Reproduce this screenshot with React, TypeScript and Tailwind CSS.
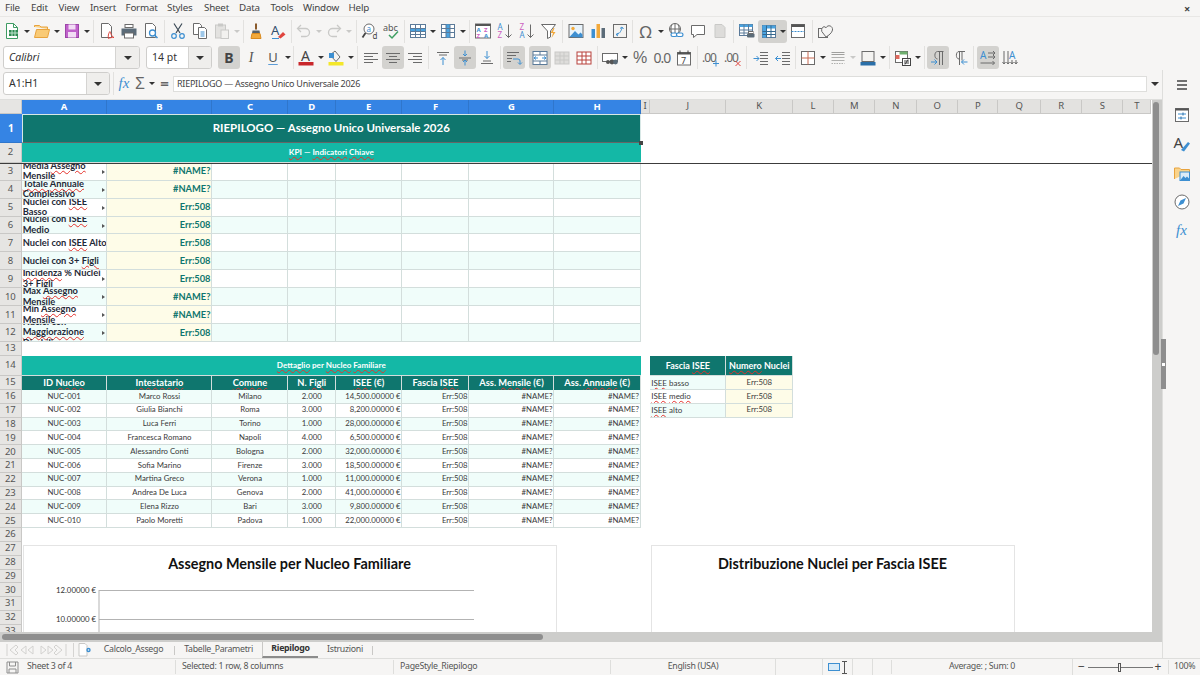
import type { ReactNode } from 'react'

const UI = "font-['Noto_Sans',sans-serif]"
const CELL = "font-['Lato','Liberation_Sans',sans-serif]"

const MENUS: [string, string][] = [
  ['File', 'w-[26px]'], ['Edit', 'w-[27.5px]'], ['View', 'w-[31.5px]'], ['Insert', 'w-[35.5px]'], ['Format', 'w-[41.5px]'],
  ['Styles', 'w-[37px]'], ['Sheet', 'w-[35px]'], ['Data', 'w-[31.5px]'], ['Tools', 'w-[32.5px]'], ['Window', 'w-[45.5px]'], ['Help', 'w-[30px]'],
]

const GREY = '#6b6b6b'
const BLUE = '#3d8fd1'
const DIS = '#c9c9c7'

function Ic({ children }: { children: ReactNode }) {
  return <svg width="18" height="18" viewBox="0 0 18 18" fill="none" strokeWidth="1">{children}</svg>
}

function Btn({ children, on }: { children: ReactNode; on?: boolean }) {
  return (
    <div className={`w-[22px] h-[23px] flex items-center justify-center shrink-0 rounded-[3px] ${on ? 'bg-[#d3d2cf]' : ''}`}>
      {children}
    </div>
  )
}

function Dd({ off }: { off?: boolean }) {
  return (
    <div className="w-[8px] h-[23px] flex items-center justify-center shrink-0">
      <div className={`w-0 h-0 border-l-[3px] border-r-[3px] border-t-[3px] border-l-transparent border-r-transparent ${off ? 'border-t-[#c9c9c7]' : 'border-t-[#333]'}`} />
    </div>
  )
}

function Sep({ w }: { w: string }) {
  return (
    <div className={`${w} h-[23px] flex justify-center shrink-0`}>
      <div className="w-px h-full bg-[#e2e1df]" />
    </div>
  )
}

function Select({ label, w, dd, italic }: { label: string; w: string; dd: string; italic?: boolean }) {
  return (
    <div className={`${w} h-[23px] flex shrink-0 rounded-[3px] border border-[#cfcecc] bg-white overflow-hidden`}>
      <div className={`flex-1 pl-[5px] flex items-center text-[10.5px] text-[#333] ${italic ? 'italic' : ''}`}>{label}</div>
      <div className={`${dd} flex items-center justify-center bg-[#efeeec] border-l border-[#d5d4d2]`}>
        <div className="w-0 h-0 border-l-[4px] border-r-[4px] border-t-[4px] border-l-transparent border-r-transparent border-t-[#333]" />
      </div>
    </div>
  )
}

function Lines({ d, color = GREY }: { d: string; color?: string }) {
  return <path d={d} stroke={color} />
}

function Toolbar1() {
  return (
    <div className="h-[28px] flex items-center pl-px">
      <Btn><Ic><path d="M3.5 1.5h7l4 4v11h-11z" fill="#fff" stroke="#3f9c63" /><path d="M10.5 1.5v4h4" stroke="#3f9c63" /><rect x="6" y="8" width="9" height="6" fill="#2f8a52" /><path d="M9 8v6M12 8v6M6 11h9" stroke="#bfe3cc" /></Ic></Btn>
      <Dd />
      <Btn><Ic><path d="M1.5 5V3.5h5l1.5 1.5h6.5V7" fill="#f9d38b" stroke="#e8a33d" /><path d="M1.5 15.5 3.5 7.5h13l-2 8z" fill="#f9ca75" stroke="#e8a33d" /></Ic></Btn>
      <Dd />
      <Btn><Ic><rect x="2.5" y="2.5" width="13" height="13" fill="#c061cb" stroke="#9c45a8" /><rect x="5.5" y="2.5" width="7" height="5" fill="#f2dcf5" /><rect x="5" y="10" width="8" height="5.5" fill="#f2dcf5" /></Ic></Btn>
      <Dd />
      <Sep w="w-[5px]" />
      <Btn><Ic><path d="M3.5 1.5h7l3 3v11h-10z" fill="#fff" stroke={GREY} /><path d="M10.5 16.5c-1-3 1-7 1.5-7s1 5 4 6c-2 0-4 0-5.500 1z" stroke="#e0453e" /></Ic></Btn>
      <Btn><Ic><rect x="5" y="2.500" width="8" height="3" fill="#fff" stroke={GREY} /><path d="M1.500 6.500h15v7h-15z" fill="#5b6b78" /><rect x="4.500" y="11" width="9" height="5" fill="#fff" stroke={GREY} /></Ic></Btn>
      <Btn><Ic><path d="M3.500 1.500h7l3 3v11h-10z" fill="#fff" stroke={GREY} /><circle cx="10.500" cy="11" r="3" fill="#fff" stroke={BLUE} strokeWidth="1.300" /><path d="m12.500 13 3 3" stroke={BLUE} strokeWidth="1.500" /></Ic></Btn>
      <Sep w="w-[5px]" />
      <Btn><Ic><path d="M5 1.500 11 11M13 1.500 7 11" stroke="#3c4a56" strokeWidth="1.200" /><circle cx="5" cy="14" r="2.300" stroke={BLUE} strokeWidth="1.200" /><circle cx="13" cy="14" r="2.300" stroke={BLUE} strokeWidth="1.200" /></Ic></Btn>
      <Btn><Ic><path d="M2.500 1.500h6l2 2v9h-8z" fill="#fff" stroke={GREY} /><path d="M7.500 5.500h6l2 2v9h-8z" fill="#fff" stroke={GREY} /><path d="M9.500 10h4M9.500 12h4M9.500 14h4" stroke={BLUE} /></Ic></Btn>
      <Btn><Ic><rect x="2.500" y="3" width="10" height="13" fill="#e3e2e0" stroke={DIS} /><rect x="5" y="1.500" width="5" height="3" fill={DIS} /><rect x="8" y="8" width="7.500" height="8.500" fill="#f2f1ef" stroke={DIS} /></Ic></Btn>
      <Dd off />
      <Sep w="w-[4px]" />
      <Btn><Ic><path d="M9 1.500v6" stroke="#8a5a2b" strokeWidth="2" /><path d="M5.500 8.500h7l.5 3h-8z" fill="#55606a" /><path d="M5 11.500h8l1 5H4z" fill="#f2a93b" stroke="#d98a1f" /></Ic></Btn>
      <Btn><Ic><text x="2" y="13" fontSize="13" fill="#33506e" fontFamily="Noto Sans">A</text><path d="m9 15 5-5 2.500 2.500-5 4z" fill="#e0453e" /><path d="M3 16.500h7" stroke={BLUE} /></Ic></Btn>
      <Sep w="w-[4px]" />
      <Btn><Ic><path d="M3 6.500h7.500a4 4 0 0 1 0 8H6" stroke={DIS} strokeWidth="1.300" /><path d="M6 3 2.500 6.500 6 10" stroke={DIS} strokeWidth="1.300" /></Ic></Btn>
      <Dd off />
      <Btn><Ic><path d="M15 6.500H7.500a4 4 0 0 0 0 8H12" stroke={DIS} strokeWidth="1.300" /><path d="M12 3l3.500 3.500L12 10" stroke={DIS} strokeWidth="1.300" /></Ic></Btn>
      <Dd off />
      <Sep w="w-[6px]" />
      <Btn><Ic><circle cx="8" cy="7" r="5" fill="#fff" stroke={GREY} /><path d="M4.500 11 1.500 15.500" stroke="#444" strokeWidth="1.800" /><text x="5.500" y="9.500" fontSize="8" fill={BLUE} fontFamily="Noto Sans">a</text><text x="11.500" y="17" fontSize="8" fill="#444" fontFamily="Noto Sans">d</text></Ic></Btn>
      <Btn><Ic><text x="0" y="9" fontSize="9" fill="#555" fontFamily="Noto Sans">abc</text><path d="m6 13 3 3 6-6.500" stroke="#3fa063" strokeWidth="1.500" /></Ic></Btn>
      <Sep w="w-[3.5px]" />
      <Btn><Ic><rect x="1.500" y="2.500" width="15" height="13" fill="#fff" stroke="#5b7a99" /><rect x="1.500" y="6.500" width="15" height="3" fill="#4aa3e0" /><Lines d="M1.500 6.500h15M1.500 9.500h15M1.500 12.500h15M6.500 2.500v13M11.500 2.500v13" color="#5b7a99" /></Ic></Btn>
      <Dd />
      <Btn><Ic><rect x="2.500" y="2.500" width="13" height="13" fill="#fff" stroke="#5b7a99" /><rect x="7" y="2.500" width="4" height="13" fill="#4aa3e0" /><Lines d="M7 2.500v13M11 2.500v13M2.500 6.500h13M2.500 10.500h13" color="#5b7a99" /></Ic></Btn>
      <Dd />
      <Sep w="w-[5px]" />
      <Btn><Ic><rect x="1.500" y="2" width="15" height="14" fill="#fff" stroke={GREY} /><rect x="1.500" y="2" width="15" height="2" fill="#555" /><text x="2.500" y="10" fontSize="6" fontWeight="700" fill={BLUE} fontFamily="Noto Sans">A</text><text x="2.500" y="15.500" fontSize="6" fontWeight="700" fill="#cc5fc0" fontFamily="Noto Sans">Z</text><text x="10" y="10" fontSize="6" fontWeight="700" fill="#cc5fc0" fontFamily="Noto Sans">Z</text><text x="10" y="15.500" fontSize="6" fontWeight="700" fill={BLUE} fontFamily="Noto Sans">A</text></Ic></Btn>
      <Btn><Ic><text x="1.500" y="8" fontSize="8" fill={BLUE} fontFamily="Noto Sans">A</text><text x="1.500" y="16" fontSize="8" fill="#cc5fc0" fontFamily="Noto Sans">Z</text><path d="M12.500 2.500v13M9.500 12.500l3 3 3-3" stroke={GREY} /></Ic></Btn>
      <Btn><Ic><text x="1.500" y="8" fontSize="8" fill="#cc5fc0" fontFamily="Noto Sans">Z</text><text x="1.500" y="16" fontSize="8" fill={BLUE} fontFamily="Noto Sans">A</text><path d="M12.500 2.500v13M9.500 12.500l3 3 3-3" stroke={GREY} /></Ic></Btn>
      <Btn><Ic><path d="M1.500 2.500h14l-5 6.500v6l-3 1.500V9z" fill="#fff" stroke={GREY} /><path d="m13.500 6-3 5h2.500l-1.500 5 4-6h-2.500l1.500-4z" fill="#f2a93b" /></Ic></Btn>
      <Sep w="w-[5px]" />
      <Btn><Ic><rect x="2" y="2.500" width="14" height="13" fill="#e8f3fb" stroke={GREY} /><circle cx="6" cy="6.500" r="1.700" fill="#f2a93b" /><path d="M2.500 15 8 9l3.500 3.500 2-2 2 2v3z" fill={BLUE} /></Ic></Btn>
      <Btn><Ic><rect x="2.500" y="7" width="3.500" height="9" fill={BLUE} /><rect x="7.500" y="2" width="3.500" height="14" fill="#f2a93b" /><rect x="12.500" y="6" width="3.500" height="10" fill="#5b6b78" /></Ic></Btn>
      <Btn><Ic><rect x="2.500" y="2.500" width="13" height="13" fill="#f4f3f1" stroke={GREY} /><path d="M5 12.500c3 0 5-3 6-6.500M9 6.500l2-1.500 1.500 2M5 12.500l2.500-1.500M5 12.500l2 1.500" stroke={BLUE} /></Ic></Btn>
      <Sep w="w-[4px]" />
      <Btn><span className="text-[17px] leading-none text-[#666]">Ω</span></Btn>
      <Dd />
      <Btn><Ic><circle cx="8" cy="7" r="5.500" fill="#fff" stroke={GREY} /><Lines d="M2.500 7h11M8 1.500v11M5 2.500c-1.500 3-1.500 6 0 9M11 2.500c1.500 3 1.500 6 0 9" /><rect x="4" y="11" width="6" height="3.500" rx="1.700" fill="#fff" stroke={BLUE} strokeWidth="1.200" /><rect x="9.500" y="11" width="6.500" height="3.500" rx="1.700" fill="#fff" stroke={BLUE} strokeWidth="1.200" /></Ic></Btn>
      <Btn><Ic><path d="M2.500 3.500h13v9H8l-3.500 3v-3h-2z" fill="#fff" stroke={GREY} /></Ic></Btn>
      <Btn><Ic><path d="M4 2.500h7l3 3v10H4z" fill="#dddcda" stroke={DIS} /></Ic></Btn>
      <Sep w="w-[5.500px]" />
      <Btn><Ic><rect x="1.500" y="2.500" width="13" height="11" fill="#fff" stroke="#5b7a99" /><rect x="1.500" y="2.500" width="13" height="2.500" fill="#4aa3e0" /><Lines d="M1.500 8h13M1.500 11h13M6 2.500v11M10.500 2.500v11" color="#5b7a99" /><rect x="9" y="11.500" width="7.500" height="4" rx="1" fill="#5b6b78" /><rect x="10.500" y="9.500" width="4.500" height="2" fill="#fff" stroke={GREY} /></Ic></Btn>
      <div className="w-[29px] h-[23px] flex items-center shrink-0 rounded-[3px] bg-[#d3d2cf]">
        <div className="w-[21px] flex justify-center"><Ic><rect x="2.500" y="3.500" width="13" height="12" fill="#fff" stroke="#5b7a99" /><rect x="2.500" y="3.500" width="13" height="3" fill="#4aa3e0" /><rect x="2.500" y="3.500" width="4" height="12" fill="#4aa3e0" /><Lines d="M2.500 9.500h13M2.500 12.500h13M6.500 3.500v12M11 3.500v12" color="#34688f" /></Ic></div>
        <Dd />
      </div>
      <Btn><Ic><rect x="2.500" y="2.500" width="13" height="13" fill="#fff" stroke={GREY} /><rect x="2.500" y="2.500" width="13" height="2.500" fill="#555" /><path d="M2.500 9.500h13" stroke={BLUE} strokeDasharray="2 1" /></Ic></Btn>
      <Sep w="w-[6px]" />
      <Btn><Ic><rect x="1.500" y="6.500" width="9" height="9" fill="#f6f5f4" stroke={GREY} /><path d="M9 15 4.800 9.500C3.800 6 7 3 9 5.800 11 2 16 4 15.500 8c-.5 3-4 5.500-6.500 7z" fill="#f6f5f4" stroke={GREY} /></Ic></Btn>
    </div>
  )
}

function Toolbar2() {
  return (
    <div className="h-[25px] flex items-center pl-[3px]">
      <Select label="Calibri" w="w-[137px]" dd="w-[24px]" italic />
      <div className="w-[6px] shrink-0" />
      <Select label="14 pt" w="w-[66px]" dd="w-[23px]" />
      <div className="w-[6px] shrink-0" />
      <Btn on><span className="text-[14px] font-bold text-[#444]">B</span></Btn>
      <Btn><span className="text-[14px] italic text-[#555] font-['Liberation_Serif',serif]">I</span></Btn>
      <Btn><span className="text-[13px] text-[#555] underline decoration-[#5d9cd6] underline-offset-2">U</span></Btn>
      <Dd />
      <Sep w="w-[3px]" />
      <Btn><Ic><text x="4" y="12" fontSize="14" fill="#444" fontFamily="Noto Sans">A</text><rect x="1.500" y="13" width="15" height="3.500" fill="#c9272b" /></Ic></Btn>
      <Dd />
      <Btn><Ic><path d="m3 6 5-4 5 6-4 4.500z" fill="#f4f3f1" stroke={GREY} /><rect x="2" y="4" width="5" height="5" fill={BLUE} /><rect x="1.500" y="13" width="15" height="3.500" fill="#f4e72a" /></Ic></Btn>
      <Dd />
      <Sep w="w-[5px]" />
      <Btn><Ic><Lines d="M2 4.500h14M2 7.500h9M2 10.500h14M2 13.500h9" /></Ic></Btn>
      <Btn on><Ic><Lines d="M2 4.500h14M5 7.500h8M2 10.500h14M5 13.500h8" /></Ic></Btn>
      <Btn><Ic><Lines d="M2 4.500h14M7 7.500h9M2 10.500h14M7 13.500h9" /></Ic></Btn>
      <Sep w="w-[5.500px]" />
      <Btn><Ic><Lines d="M3 3.500h12M5 6h8" /><path d="M9 16V8.500M6.500 11 9 8.500 11.500 11" stroke={BLUE} /></Ic></Btn>
      <Btn on><Ic><Lines d="M3 9h12" /><Lines d="M6 11h6" /><path d="M9 1.500V7M7 5l2 2 2-2M9 16.500V11M7 13l2-2 2 2" stroke={BLUE} /></Ic></Btn>
      <Btn><Ic><Lines d="M3 14.500h12M5 12h8" /><path d="M9 2v7.500M6.500 7 9 9.500 11.500 7" stroke={BLUE} /></Ic></Btn>
      <Sep w="w-[5.500px]" />
      <Btn on><Ic><Lines d="M2 3.500h12M2 6.500h9M2 9.500h5M2 12.500h4" /><path d="M8 10h5a2 2 0 0 1 2 2v3M13 13.500l2 2 2-2" stroke={BLUE} /></Ic></Btn>
      <div className="w-[4px] shrink-0" />
      <Btn on><Ic><rect x="2" y="2.500" width="14" height="13" fill="#fff" stroke="#5b7a99" /><Lines d="M2 6h14M2 12h14M9 2.500V6M9 12v3.500" color="#5b7a99" /><path d="M3 9h4M5 7.500 3 9l2 1.500M15 9h-4M13 7.500 15 9l-2 1.500" stroke={BLUE} /></Ic></Btn>
      <Btn><Ic><rect x="2" y="3" width="14" height="12" fill="#dedddb" stroke={DIS} /><Lines d="M2 7h14M2 11h14M7 3v12M11 3v12" color={DIS} /></Ic></Btn>
      <Btn><Ic><rect x="2" y="3" width="14" height="12" fill="#fff" stroke="#b8423d" /><Lines d="M2 7h14M2 11h14M7 3v12M11 3v12" color="#b8423d" /></Ic></Btn>
      <Sep w="w-[4px]" />
      <Btn><Ic><rect x="1.500" y="4.500" width="15" height="8" fill="#fff" stroke={GREY} /><circle cx="7" cy="13" r="2" fill="#555" /><circle cx="11" cy="13" r="2.400" fill="#555" /><circle cx="14.500" cy="13" r="2.400" fill="#5b6b78" /></Ic></Btn>
      <Dd />
      <Btn><span className="text-[16px] text-[#666] font-['Liberation_Sans',sans-serif]">%</span></Btn>
      <Btn><span className="text-[14px] tracking-[-1px] text-[#666]">0.0</span></Btn>
      <Btn><Ic><rect x="2.500" y="3.500" width="13" height="12.500" fill="#fff" stroke={GREY} /><rect x="2.500" y="3.500" width="13" height="2" fill="#555" /><path d="M5 1.500v3M13 1.500v3" stroke="#444" /><text x="6" y="14.500" fontSize="9" fill="#444" fontFamily="Noto Sans">7</text></Ic></Btn>
      <Sep w="w-[4.500px]" />
      <Btn><Ic><text x="0" y="13" fontSize="12" letterSpacing="-1" fill="#666" fontFamily="Noto Sans">.00</text><path d="M14 11.500v6M11 14.500h6" stroke={BLUE} /></Ic></Btn>
      <Btn><Ic><text x="0" y="13" fontSize="12" letterSpacing="-1" fill="#666" fontFamily="Noto Sans">.00</text><path d="m11.500 12 5 5M16.500 12l-5 5" stroke="#e0453e" /></Ic></Btn>
      <Sep w="w-[6px]" />
      <Btn><Ic><Lines d="M8 3.500h8M8 6.500h8M8 9.500h8M8 12.500h8M8 15.500h8" /><path d="M1.500 9.500H7M4.500 7 7 9.500 4.500 12" stroke={BLUE} /></Ic></Btn>
      <Btn><Ic><Lines d="M8 3.500h8M8 6.500h8M8 9.500h8M8 12.500h8M8 15.500h8" /><path d="M1.500 9.500H7M4 7 1.500 9.500 4 12" stroke={BLUE} /></Ic></Btn>
      <Sep w="w-[3px]" />
      <Btn><Ic><rect x="2.500" y="2.500" width="13" height="13" fill="#fff" stroke={GREY} /><Lines d="M2.500 9h13M9 2.500v13" color="#c96a52" /></Ic></Btn>
      <Dd />
      <Btn><Ic><Lines d="M2.500 3.500h13M2.500 5.500h13" color="#a0a09e" /><Lines d="M2.500 8.500h13M2.500 11.500h13" color="#b0b0ae" /><path d="M2.500 14.500h13" stroke="#b0b0ae" strokeDasharray="1.500 1" /></Ic></Btn>
      <Dd off />
      <Btn><Ic><rect x="3" y="2.500" width="12" height="10" fill="#f4f3f1" stroke={GREY} /><rect x="1.500" y="13" width="15" height="3.500" fill="#2a6fa8" /></Ic></Btn>
      <Dd />
      <Sep w="w-[5px]" />
      <Btn><Ic><rect x="1.500" y="2.500" width="12" height="11" fill="#fff" stroke={GREY} /><rect x="5.500" y="2.500" width="8" height="3" fill="#6fb06f" /><rect x="1.500" y="6" width="4" height="4" fill="#e06a5e" /><rect x="8.500" y="9.500" width="8" height="7" fill="#fff" stroke="#444" /><path d="M10 12h5M10 14h5M14 10.500l-3 5" stroke="#444" /></Ic></Btn>
      <Dd />
      <Sep w="w-[5px]" />
      <Btn on><Ic><path d="M8.500 10C5 10 5 2.500 8.500 2.500h6M10.500 2.500V16M13.500 2.500V16" stroke={GREY} /><path d="M2 13h6M5.500 10.500 8 13l-2.500 2.500" stroke={BLUE} /></Ic></Btn>
      <Btn><Ic><path d="M8 10C4.500 10 4.500 2.500 8 2.500h6M8.500 2.500V16M11 2.500v9" stroke={GREY} /><path d="M10.500 13h6M13 10.500 10.500 13l2.500 2.500" stroke={BLUE} /></Ic></Btn>
      <Sep w="w-[6px]" />
      <Btn on><Ic><text x="1" y="10" fontSize="10" fill={BLUE} fontFamily="Noto Sans">A</text><Lines d="M9 4h7M9 8h7M1.500 14h14" /><path d="m14 2 2 2-2 2M14 6l2 2-2 2M13.500 12l2 2-2 2" stroke={GREY} /></Ic></Btn>
      <Btn><Ic><text x="8" y="10" fontSize="10" fill={BLUE} fontFamily="Noto Sans">A</text><path d="M3 2v13M7 2v13M1.500 13 3 15l1.500-2M5.500 13 7 15l1.500-2M11 11v4M9.500 13l1.500 2 1.500-2M15 11v4M13.500 13l1.500 2 1.500-2" stroke={GREY} /></Ic></Btn>
    </div>
  )
}

function Sp({ children }: { children: ReactNode }) {
  return <span className="underline decoration-wavy decoration-[#e5312b] decoration-[1px] underline-offset-[1px]">{children}</span>
}

const ROW_HEAD = `flex items-center justify-center bg-[#e6e5e3] border-r border-b border-[#c9c8c6] text-[9.500px] text-[#555] ${UI}`
const COL_HEAD = `flex items-center justify-center bg-[#e3e2e0] border-r border-b border-[#c9c8c6] text-[9.500px] text-[#555] ${UI}`
const COL_SEL = `flex items-center justify-center bg-[#3584e4] border-r border-[#2f76cc] text-[9.500px] font-bold text-white ${UI}`

const GREY_COLS = ['I', 'J', 'K', 'L', 'M', 'N', 'O', 'P', 'Q', 'R', 'S', 'T']

const KPI: { lines: ReactNode[]; value: string; arrow: boolean }[] = [
  { lines: [<>Media <Sp>Assegno</Sp></>, <Sp>Mensile</Sp>], value: '#NAME?', arrow: true },
  { lines: [<><Sp>Totale</Sp> <Sp>Annuale</Sp></>, <Sp>Complessivo</Sp>], value: '#NAME?', arrow: true },
  { lines: [<>Nuclei con <Sp>ISEE</Sp></>, <Sp>Basso</Sp>], value: 'Err:508', arrow: true },
  { lines: [<>Nuclei con <Sp>ISEE</Sp></>, <Sp>Medio</Sp>], value: 'Err:508', arrow: true },
  { lines: [<>Nuclei con <Sp>ISEE</Sp> Alto</>], value: 'Err:508', arrow: false },
  { lines: [<>Nuclei con 3+ <Sp>Figli</Sp></>], value: 'Err:508', arrow: false },
  { lines: [<><Sp>Incidenza</Sp> % Nuclei</>, <>3+ <Sp>Figli</Sp></>], value: 'Err:508', arrow: true },
  { lines: [<>Max <Sp>Assegno</Sp></>, <Sp>Mensile</Sp>], value: '#NAME?', arrow: true },
  { lines: [<>Min <Sp>Assegno</Sp></>, <Sp>Mensile</Sp>], value: '#NAME?', arrow: true },
  { lines: ['Nuclei con', <Sp>Maggiorazione</Sp>, <Sp>Disabili</Sp>], value: 'Err:508', arrow: true },
]

const NUCLEI = [
  ['NUC-001', 'Marco Rossi', 'Milano', '2.000', '14,500.00000 €'],
  ['NUC-002', 'Giulia Bianchi', 'Roma', '3.000', '8,200.00000 €'],
  ['NUC-003', 'Luca Ferri', 'Torino', '1.000', '28,000.00000 €'],
  ['NUC-004', 'Francesca Romano', 'Napoli', '4.000', '6,500.00000 €'],
  ['NUC-005', 'Alessandro Conti', 'Bologna', '2.000', '32,000.00000 €'],
  ['NUC-006', 'Sofia Marino', 'Firenze', '3.000', '18,500.00000 €'],
  ['NUC-007', 'Martina Greco', 'Verona', '1.000', '11,000.00000 €'],
  ['NUC-008', 'Andrea De Luca', 'Genova', '2.000', '41,000.00000 €'],
  ['NUC-009', 'Elena Rizzo', 'Bari', '3.000', '9,800.00000 €'],
  ['NUC-010', 'Paolo Moretti', 'Padova', '1.000', '22,000.00000 €'],
]

const FASCE: ReactNode[] = [<><Sp>ISEE</Sp> basso</>, <><Sp>ISEE</Sp> <Sp>medio</Sp></>, <><Sp>ISEE</Sp> alto</>]

const BORDER = 'border-r border-b border-[#d3dedc]'

function tint(i: number) {
  return i % 2 === 0 ? 'bg-[#f0fdfa]' : 'bg-white'
}

function Sheet() {
  return (
    <div className={`relative flex-1 min-h-0 overflow-hidden bg-white text-[#3a3a3a] ${CELL}`}>
      <div className="grid grid-cols-[21.700px_85.800px_105px_76px_47.500px_66.500px_67px_85px_86.400px_9.300px_76.300px_66.700px_40.800px_41.500px_41.700px_41px_40.300px_42.700px_41.300px_41px_28px] grid-rows-[14px_29px_19.700px_repeat(10,17.950px)_14px_20px_14px_repeat(10,13.800px)_repeat(8,13.830px)]">
        {/* column headers */}
        <div className="bg-[#e6e5e3] border-r border-b border-[#c9c8c6]" />
        {['A', 'B', 'C', 'D', 'E', 'F', 'G', 'H'].map((c) => <div key={c} className={COL_SEL}>{c}</div>)}
        {GREY_COLS.map((c) => <div key={c} className={COL_HEAD}>{c}</div>)}

        {/* titolo */}
        <div className={`flex items-center justify-center bg-[#3584e4] border-b border-[#2f76cc] text-[10px] font-bold text-white ${UI}`}>1</div>
        <div className="col-span-8 flex items-center justify-center bg-[#0f766e] border-b border-[#d3dedc] text-[11.500px] font-bold text-white">RIEPILOGO — Assegno Unico Universale 2026</div>
        <div className="col-span-12" />

        <div className={ROW_HEAD}>2</div>
        <div className="col-span-8 flex items-center justify-center bg-[#14b8a6] border-b border-[#d3dedc] text-[8.200px] font-bold text-white"><span><Sp>KPI</Sp> — <Sp>Indicatori</Sp> <Sp>Chiave</Sp></span></div>
        <div className="col-span-12" />

        {/* KPI */}
        {KPI.map((k, i) => (
          <div key={i} className="contents">
            <div className={ROW_HEAD}>{i + 3}</div>
            <div className={`relative flex items-center overflow-hidden pl-px pr-[6px] ${BORDER} ${tint(i + 1)}`}>
              <div className="text-[9.300px] leading-[10.500px] font-bold text-[#1f2937] whitespace-nowrap">
                {k.lines.map((l, j) => <div key={j}>{l}</div>)}
              </div>
              {k.arrow && <div className="absolute right-[1px] top-[7px] w-0 h-0 border-y-[2.500px] border-l-[3px] border-y-transparent border-l-[#555]" />}
            </div>
            <div className={`flex items-center justify-end pr-px bg-[#fefce8] text-[9.300px] font-bold text-[#0f766e] ${BORDER}`}>{k.value}</div>
            {['C', 'D', 'E', 'F', 'G', 'H'].map((c) => <div key={c} className={`${BORDER} ${tint(i + 1)}`} />)}
            <div className="col-span-12" />
          </div>
        ))}

        <div className={ROW_HEAD}>13</div>
        <div className="col-span-20" />

        {/* dettaglio */}
        <div className={ROW_HEAD}>14</div>
        <div className="col-span-8 flex items-center justify-center bg-[#14b8a6] border-b border-[#d3dedc] text-[8.100px] font-bold text-white"><span><Sp>Dettaglio</Sp> per <Sp>Nucleo</Sp> <Sp>Familiare</Sp></span></div>
        <div />
        <div className="flex items-center justify-center bg-[#0f766e] border-r border-b border-[#d3dedc] text-[9px] font-bold text-white">Fascia&nbsp;<Sp>ISEE</Sp></div>
        <div className="flex items-center justify-center bg-[#0f766e] border-b border-r border-[#d3dedc] text-[9px] font-bold text-white whitespace-nowrap"><Sp>Numero</Sp>&nbsp;Nuclei</div>
        <div className="col-span-9" />

        <div className={ROW_HEAD}>15</div>
        {[<>ID <Sp>Nucleo</Sp></>, <Sp>Intestatario</Sp>, <Sp>Comune</Sp>, <>N. <Sp>Figli</Sp></>, <><Sp>ISEE</Sp> (€)</>, <>Fascia <Sp>ISEE</Sp></>, <>Ass. <Sp>Mensile</Sp> (€)</>, <>Ass. <Sp>Annuale</Sp> (€)</>].map((h, i) => (
          <div key={i} className="flex items-center justify-center bg-[#0f766e] border-r border-[#d3dedc] text-[9.300px] font-bold text-white whitespace-nowrap"><span>{h}</span></div>
        ))}
        <div />
        <div className={`flex items-center overflow-hidden text-[8px] pl-px ${BORDER} ${tint(0)}`}><span>{FASCE[0]}</span></div>
        <div className={`flex items-center justify-center bg-[#fefce8] text-[7.800px] ${BORDER}`}>Err:508</div>
        <div className="col-span-9" />

        {NUCLEI.map((n, i) => (
          <div key={n[0]} className="contents">
            <div className={ROW_HEAD}>{i + 16}</div>
            {n.slice(0, 4).map((v, j) => <div key={j} className={`flex items-center justify-center text-[7.800px] whitespace-nowrap ${BORDER} ${tint(i)}`}>{v}</div>)}
            <div className={`flex items-center justify-end pr-px text-[7.800px] whitespace-nowrap ${BORDER} ${tint(i)}`}>{n[4]}</div>
            <div className={`flex items-center justify-end pr-px text-[7.800px] ${BORDER} ${tint(i)}`}>Err:508</div>
            <div className={`flex items-center justify-end pr-px text-[7.800px] ${BORDER} ${tint(i)}`}>#NAME?</div>
            <div className={`flex items-center justify-end pr-px text-[7.800px] ${BORDER} ${tint(i)}`}>#NAME?</div>
            <div />
            {i < 2 ? (
              <>
                <div className={`flex items-center overflow-hidden text-[8px] pl-px ${BORDER} ${tint(i + 1)}`}><span>{FASCE[i + 1]}</span></div>
                <div className={`flex items-center justify-center bg-[#fefce8] text-[7.800px] ${BORDER}`}>Err:508</div>
              </>
            ) : (
              <div className="col-span-2" />
            )}
            <div className="col-span-9" />
          </div>
        ))}

        {[26, 27, 28, 29, 30, 31, 32, 33].map((r) => (
          <div key={r} className="contents">
            <div className={ROW_HEAD}>{r}</div>
            <div className="col-span-20" />
          </div>
        ))}
      </div>

      {/* frozen pane line, selection */}
      <div className="absolute left-0 right-0 top-[62.700px] h-px bg-[#3c3c3c]" />
      <div className="absolute left-[21.700px] top-[14px] w-[619.500px] h-[29px] border border-[#d8e8e6] border-b-[#666]" />
      <div className="absolute left-[638.500px] top-[41px] w-[4px] h-[4px] bg-[#444]" />

      {/* charts */}
      <div className="absolute left-[22.500px] top-[444.500px] w-[534px] h-[120px] bg-white border border-[#e4e4e4] flex flex-col items-center">
        <div className="pt-[8px] text-[14.400px] leading-[20px] font-bold text-[#111]">Assegno Mensile per Nucleo Familiare</div>
        <svg width="534" height="70" viewBox="0 0 534 70" className="shrink-0">
          <path d="M76 16.500h375M76 45.500h375M76 16v54" stroke="#b3b3b3" strokeWidth="1" fill="none" />
          <text x="73" y="18.500" textAnchor="end" fontSize="7.800" fill="#333" fontFamily="Lato">12.00000 €</text>
          <text x="73" y="47.500" textAnchor="end" fontSize="7.800" fill="#333" fontFamily="Lato">10.00000 €</text>
        </svg>
      </div>
      <div className="absolute left-[650.500px] top-[444.500px] w-[364px] h-[120px] bg-white border border-[#e4e4e4] flex flex-col items-center">
        <div className="pt-[8px] text-[14.400px] leading-[20px] font-bold text-[#111]">Distribuzione Nuclei per Fascia ISEE</div>
      </div>
    </div>
  )
}

function TabsBar() {
  return (
    <div className={`h-[16px] flex items-center text-[8.800px] tracking-[-0.3px] text-[#555] ${UI}`}>
      <div className="w-[73px] pl-[6px] shrink-0">
        <svg width="62" height="14" viewBox="0 0 62 14" fill="none" stroke="#d3d2d0">
          <path d="M1 1v12M10 2 4 7l6 5 2-2-3-3 3-3zM20 3l-5 4 5 4zM27 3l-5 4 5 4zM35 3l5 4-5 4zM42 3l5 4-5 4zM50 2l6 5-6 5-2-2 3-3-3-3zM60 1v12" />
        </svg>
      </div>
      <div className="w-px h-[14px] bg-[#d5d4d2] shrink-0" />
      <div className="w-[19px] pl-[4px] shrink-0">
        <svg width="14" height="14" viewBox="0 0 14 14"><path d="M1 .5h6l2 2V13H1z" fill="#fff" stroke="#c9c8c6" /><circle cx="10.500" cy="7" r="2.200" fill="#3d8fd1" /><circle cx="10.500" cy="7" r=".8" fill="#fff" /></svg>
      </div>
      <div className="w-[81px] h-full flex items-center justify-center shrink-0">Calcolo_Assego</div>
      <div className="w-px h-[9px] bg-[#c9c8c6] shrink-0" />
      <div className="w-[87px] h-full flex items-center justify-center shrink-0">Tabelle_Parametri</div>
      <div className="w-[56px] h-full flex items-center justify-center shrink-0 font-bold text-[#333] border-b-2 border-[#8c8c8c] border-l border-l-[#c9c8c6]">Riepilogo</div>
      <div className="w-[54px] h-full flex items-center justify-center shrink-0">Istruzioni</div>
      <div className="w-px h-[9px] bg-[#c9c8c6] shrink-0" />
    </div>
  )
}

function Sidebar() {
  return (
    <div className="w-[38px] shrink-0 border-l border-[#dededc] flex flex-col items-center pt-[4px]">
      <div className="h-[21px] flex items-center"><svg width="12" height="10" viewBox="0 0 12 10" stroke="#444" strokeWidth="1.300"><path d="M1 1h10M1 5h10M1 9h10" /></svg></div>
      <div className="h-[29px] mt-[5px] flex items-center"><Ic><rect x="2.500" y="2.500" width="13" height="13" fill="#fff" stroke={GREY} /><rect x="2.500" y="2.500" width="13" height="2" fill="#555" /><path d="M5 8h8M5 12h8" stroke={BLUE} /><path d="M10 6.500v3M8 10.500v3" stroke="#2a6fa8" /></Ic></div>
      <div className="h-[29px] flex items-center"><Ic><text x="0.500" y="13" fontSize="15" fill="#444" fontFamily="Noto Sans">A</text><path d="m8 15 7-8 2 1.500-6 8z" fill={BLUE} /></Ic></div>
      <div className="h-[29px] flex items-center"><Ic><path d="M1.500 15V4h5l1.500 1.500h8.500V8" fill="#f9d38b" stroke="#e8a33d" /><rect x="7" y="8" width="9.500" height="8.500" fill="#dcecf8" stroke={BLUE} /><path d="m7.500 16 3-4 2 2 1.500-1.500 2 2V16z" fill={BLUE} /></Ic></div>
      <div className="h-[29px] flex items-center"><Ic><circle cx="9" cy="9" r="7" fill="#fff" stroke={GREY} /><path d="m13 5-2.500 5.500L5 13l2.500-5.500z" fill={BLUE} /></Ic></div>
      <div className="h-[29px] flex items-center text-[15px] italic text-[#3d8fd1] font-['Liberation_Serif',serif]">fx</div>
    </div>
  )
}

export default function App() {
  return (
    <div className={`relative w-[1200px] h-[675px] overflow-hidden flex flex-col bg-[#f6f5f4] ${UI}`}>
      <div className="h-[17px] flex items-center pl-[5px] pr-[10px] text-[9.800px] tracking-[-0.2px] text-[#444] border-b border-[#e8e7e5] shrink-0">
        {MENUS.map(([m, w]) => <div key={m} className={`${w} shrink-0`}>{m}</div>)}
        <div className="ml-auto text-[11px] font-bold text-[#444] leading-none">×</div>
      </div>
      <Toolbar1 />
      <Toolbar2 />
      <div className="flex-1 min-h-0 flex">
        <div className="flex-1 min-w-0 flex flex-col">
          {/* formula bar */}
          <div className="h-[29px] shrink-0 flex items-center pl-[3px] pb-[2px]">
            <Select label="A1:H1" w="w-[107px]" dd="w-[23px]" />
            <Sep w="w-[6px]" />
            <div className="w-[16px] flex justify-center shrink-0 text-[15px] italic text-[#3d8fd1] font-['Liberation_Serif',serif]">fx</div>
            <div className="w-[16px] flex justify-center shrink-0 text-[16px] text-[#666] font-['Liberation_Sans',sans-serif]">Σ</div>
            <Dd />
            <div className="w-[17px] flex justify-center shrink-0 text-[15px] font-bold text-[#666]">=</div>
            <div className="flex-1 min-w-0 h-[16px] flex items-center pl-[3px] bg-white border border-[#dededc] text-[9px] tracking-[-0.25px] text-[#444]">RIEPILOGO — Assegno Unico Universale 2026</div>
            <div className="w-[15px] flex justify-center"><div className="w-0 h-0 border-l-[4px] border-r-[4px] border-t-[4px] border-l-transparent border-r-transparent border-t-[#333]" /></div>
          </div>
          <div className="flex-1 min-h-0 flex border-t border-[#dededc]">
            <Sheet />
            <div className="w-[10px] shrink-0 bg-[#cdcdcb] pl-px pt-[2px]">
              <div className="w-[6px] h-[253px] rounded-[3px] bg-[#8e8e8e]" />
            </div>
          </div>
          <div className="h-[10px] shrink-0 flex items-center bg-[#cdcdcb] pl-[2px] pr-[11px]">
            <div className="w-[541px] h-[6.500px] rounded-[3px] bg-[#8e8e8e]" />
          </div>
          <TabsBar />
        </div>
        <Sidebar />
      </div>

      {/* status bar */}
      <div className="h-[17px] shrink-0 flex items-center border-t border-[#dededc] text-[8.800px] tracking-[-0.3px] text-[#555]">
        <div className="w-[175px] flex items-center pl-[6px]">
          <svg width="13" height="13" viewBox="0 0 13 13" fill="none" stroke="#8e8e8e"><path d="M1 1h11v11H1zM3.500 1v4h6V1M3 12V8h7v4" /></svg>
          <span className="ml-[8px]">Sheet 3 of 4</span>
        </div>
        <div className="w-[218px] pl-[6px] border-l border-[#dededc]">Selected: 1 row, 8 columns</div>
        <div className="w-[217px] pl-[6px] border-l border-[#dededc]">PageStyle_Riepilogo</div>
        <div className="w-[165px] text-center border-l border-[#dededc]">English (USA)</div>
        <div className="w-[47px] border-l border-[#dededc] h-full" />
        <div className="w-[30px] flex items-center border-l border-[#dededc] h-full pl-[5px]">
          <div className="w-[12px] h-[8px] border border-[#3d8fd1] bg-[#d9ebf8]" />
          <svg width="7" height="13" viewBox="0 0 7 13" className="ml-[1px]" stroke="#555" fill="none"><path d="M1 .5h5M3.500.5v12M1 12.500h5" /></svg>
        </div>
        <div className="w-[20px] border-l border-[#dededc] h-full" />
        <div className="w-[19px] border-l border-[#dededc] h-full" />
        <div className="w-[181px] text-center border-l border-[#dededc]">Average: ; Sum: 0</div>
        <div className="w-[96px] flex items-center border-l border-[#dededc] h-full pl-[5px]">
          <span className="text-[12px] leading-none text-[#444]">−</span>
          <div className="relative w-[65px] h-px bg-[#777] ml-[3px]"><div className="absolute left-[30px] top-[-4px] w-[3px] h-[9px] border border-[#555] bg-[#f6f5f4]" /></div>
          <span className="ml-[2px] text-[12px] leading-none text-[#444]">+</span>
        </div>
        <div className="pl-[5px] border-l border-[#dededc]">100%</div>
      </div>

      {/* sidebar handle */}
      <div className="absolute left-[1160.500px] top-[339px] w-[5px] h-[50px] bg-[#8e8e8e] flex items-center justify-center">
        <div className="w-[3px] h-[3px] bg-white" />
      </div>
    </div>
  )
}
